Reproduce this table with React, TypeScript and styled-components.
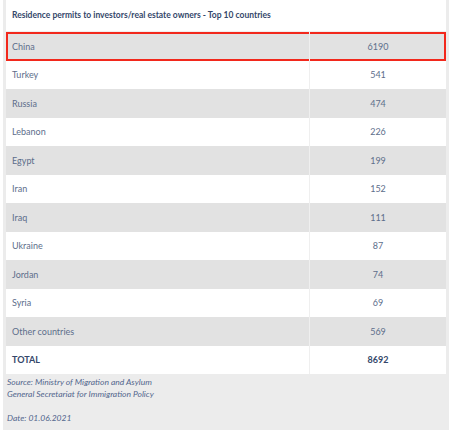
import React from "react";
import styled, { createGlobalStyle } from "styled-components";

const Global = createGlobalStyle`
  html, body { margin: 0; padding: 0; background: #ffffff; }
  body { font-family: Lato, "DejaVu Sans Condensed", sans-serif; }
`;

const Frame = styled.div`
  width: 446px;
  margin: 0 0 0 3px;
  background: #ececec;
  padding: 0 3px 6px 3px;
  box-sizing: border-box;
`;

const Table = styled.div`
  width: 440px;
  background: #ffffff;
  display: flex;
  flex-direction: column;
`;

const Header = styled.div`
  height: 32px;
  display: flex;
  align-items: center;
  padding: 0 0 2px 6px;
  font-size: 8.5px;
  font-weight: 700;
  color: #34476a;
  border-bottom: 1px solid #efefef;
  box-sizing: border-box;
`;

const Row = styled.div<{ $shade?: boolean; $flag?: boolean; $bold?: boolean }>`
  display: grid;
  grid-template-columns: 304px 1fr;
  height: 28.5px;
  background: ${(p) => (p.$shade ? "#e2e2e2" : "#ffffff")};
  box-shadow: ${(p) => (p.$flag ? "inset 0 0 0 2px #f2281c" : "none")};
  font-size: 9px;
  font-weight: ${(p) => (p.$bold ? 700 : 400)};
  color: ${(p) => (p.$bold ? "#34476a" : "#5d6e8b")};
`;

const Name = styled.div`
  display: flex;
  align-items: center;
  padding-left: 6px;
  border-right: 1px solid #efefef;
`;

const Value = styled.div`
  display: flex;
  align-items: center;
  justify-content: center;
`;

const Footer = styled.div`
  padding: 2px 0 0 1px;
  font-size: 8.5px;
  font-style: italic;
  line-height: 12px;
  color: #52668d;
`;

const Gap = styled.div`
  height: 12px;
`;

const rows: [string, string][] = [
  ["China", "6190"],
  ["Turkey", "541"],
  ["Russia", "474"],
  ["Lebanon", "226"],
  ["Egypt", "199"],
  ["Iran", "152"],
  ["Iraq", "111"],
  ["Ukraine", "87"],
  ["Jordan", "74"],
  ["Syria", "69"],
  ["Other countries", "569"],
];

export default function App() {
  return (
    <>
      <Global />
      <Frame>
        <Table>
          <Header>Residence permits to investors/real estate owners - Top 10 countries</Header>
          {rows.map(([n, v], i) => (
            <Row key={n} $shade={i % 2 === 0} $flag={i === 0}>
              <Name>{n}</Name>
              <Value>{v}</Value>
            </Row>
          ))}
          <Row $bold>
            <Name>TOTAL</Name>
            <Value>8692</Value>
          </Row>
        </Table>
        <Footer>
          <div>Source: Ministry of Migration and Asylum</div>
          <div>General Secretariat for Immigration Policy</div>
          <Gap />
          <div>Date: 01.06.2021</div>
        </Footer>
      </Frame>
    </>
  );
}
